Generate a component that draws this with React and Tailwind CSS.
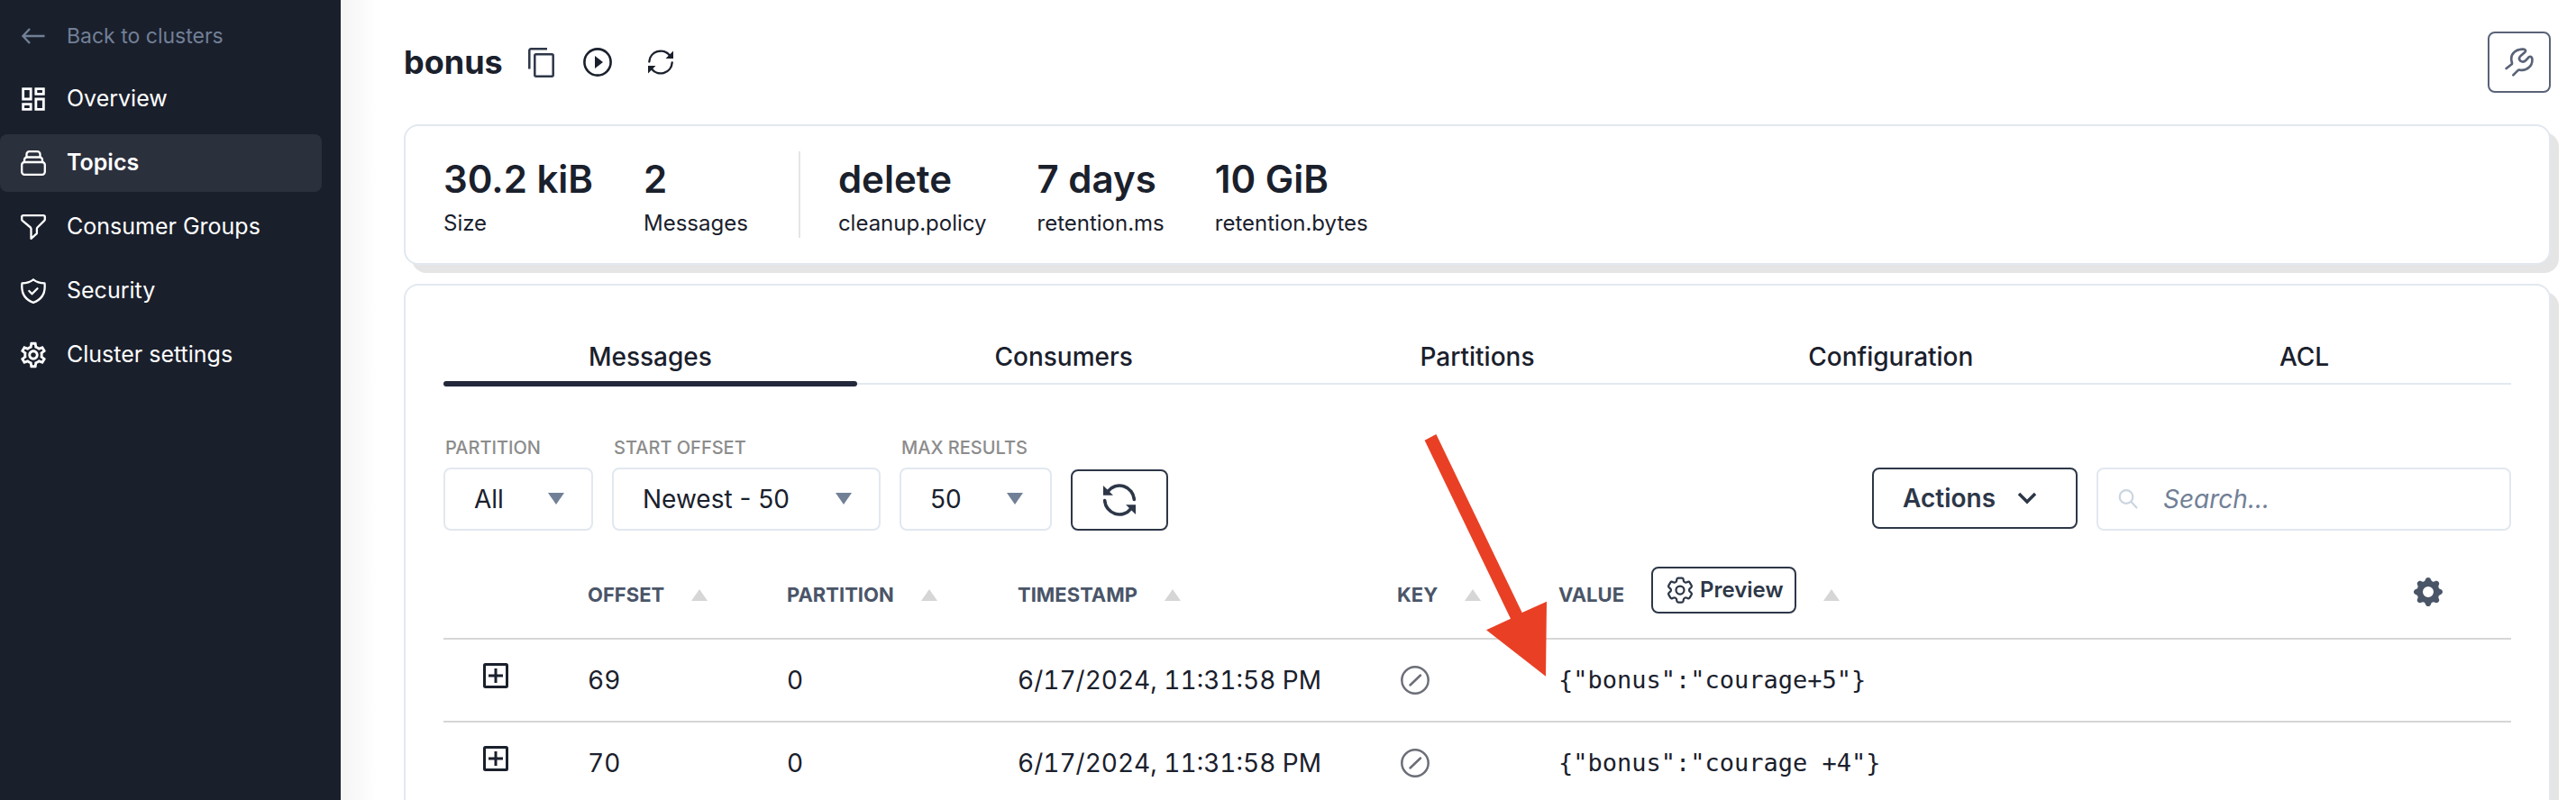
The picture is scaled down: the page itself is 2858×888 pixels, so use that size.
import { useState } from "react";
import { HiCog } from "react-icons/hi";
import { HiOutlineCog6Tooth } from "react-icons/hi2";
import { MdOutlineDashboard, MdOutlineSettings } from "react-icons/md";

function BackArrow() {
  return (
    <svg viewBox="0 0 28 28" className="size-7" fill="none" stroke="currentColor" strokeWidth="2.400">
      <path d="M26.500 14H2.500M10 6L2.500 14l7.500 8" />
    </svg>
  );
}

function TopicsIcon() {
  return (
    <svg viewBox="0 0 28 28" className="size-7" fill="none" stroke="currentColor" strokeWidth="2.300">
      <rect x="1.200" y="13" width="25.600" height="13.800" rx="3" />
      <path d="M4 13v-2.500a3 3 0 0 1 3-3h14a3 3 0 0 1 3 3V13" />
      <path d="M6.500 7.500V4.200a3 3 0 0 1 3-3h9a3 3 0 0 1 3 3v3.300" />
    </svg>
  );
}

function FunnelIcon() {
  return (
    <svg viewBox="0 0 28 28" className="size-7" fill="none" stroke="currentColor" strokeWidth="2.300" strokeLinejoin="round">
      <path d="M2.700 1.200h22.600a1.500 1.500 0 0 1 1.500 1.500v2.800a2 2 0 0 1-.6 1.400l-7.700 7.600a2 2 0 0 0-.6 1.400v5.200L11.500 26.800V15.900a2 2 0 0 0-.6-1.400L1.800 6.900a2 2 0 0 1-.6-1.400V2.700a1.500 1.500 0 0 1 1.500-1.500z" />
    </svg>
  );
}

function ShieldIcon() {
  return (
    <svg viewBox="0 0 28 28" className="size-7" fill="none" stroke="currentColor" strokeWidth="2.300" strokeLinecap="round" strokeLinejoin="round">
      <path d="M14 1.300c3.500 2.800 7.500 4 12.500 4 1.200 11-3 18.300-12.500 21.500C4.500 23.600.3 16.300 1.500 5.300c5 0 9-1.200 12.500-4z" />
      <path d="M9.300 14l3.200 3.300 6-6" />
    </svg>
  );
}

function SyncIcon({ className, stroke }) {
  return (
    <svg viewBox="0 0 28 28" className={className} fill="none" stroke="currentColor" strokeWidth={stroke} strokeLinecap="round">
      <path d="M1.300 13.500A12.700 12.700 0 0 1 24 6.500" />
      <path d="M26.700 14.500A12.700 12.700 0 0 1 4 21.500" />
      <path d="M28 1.500v8.500h-8.500z" fill="currentColor" stroke="none" />
      <path d="M0 26.500V18h8.500z" fill="currentColor" stroke="none" />
    </svg>
  );
}

function CopyIcon() {
  return (
    <svg viewBox="0 0 29 33" className="h-[33px] w-[29px]" fill="none" stroke="currentColor" strokeWidth="2.500">
      <path d="M1.300 23.500V3a1.700 1.700 0 0 1 1.700-1.700h18" />
      <rect x="7.300" y="7.300" width="20.400" height="24.400" rx="1.500" />
    </svg>
  );
}

function PlayIcon() {
  return (
    <svg viewBox="0 0 32 32" className="size-8" fill="none" stroke="currentColor" strokeWidth="2.600">
      <circle cx="16" cy="16" r="14.600" />
      <path d="M13 9l9 7-9 7z" fill="currentColor" stroke="none" />
    </svg>
  );
}

function WrenchIcon() {
  return (
    <svg viewBox="0 0 96 96" className="size-8" fill="none" stroke="currentColor" strokeWidth="8" strokeLinecap="round" strokeLinejoin="round">
      <path d="M5 69L24 54Q24 48 22 42C19 18 38 4 62 5Q74 7 66 16L52 28Q44 36 52 44Q62 50 70 42L80 31Q88 26 91 36C94 60 74 78 50 74Q46 73 43 76L28 91" />
    </svg>
  );
}

const nav = [
  { label: "Overview", icon: <MdOutlineDashboard className="size-[34px]" /> },
  { label: "Topics", icon: <TopicsIcon />, active: true },
  { label: "Consumer Groups", icon: <FunnelIcon /> },
  { label: "Security", icon: <ShieldIcon /> },
  { label: "Cluster settings", icon: <MdOutlineSettings className="size-[34px]" /> },
];

function Sidebar() {
  return (
    <nav className="w-[378px] shrink-0 bg-[#1a1f2c] pt-[9px] text-white" aria-label="Main">
      <a href="#clusters" className="flex h-[62px] items-center text-[23px] text-[#718096]">
        <span className="flex w-[74px] justify-center">
          <BackArrow />
        </span>
        Back to clusters
      </a>
      <ul className="mt-[7px] mr-[21px] flex flex-col gap-[7px]">
        {nav.map((n) => (
          <li key={n.label}>
            <a
              href={"#" + n.label}
              className={
                "flex h-16 items-center rounded-lg text-[25px] " +
                (n.active ? "bg-[#2b303d] font-semibold" : "")
              }
            >
              <span className="flex w-[74px] justify-center">{n.icon}</span>
              {n.label}
            </a>
          </li>
        ))}
      </ul>
    </nav>
  );
}

function Stat({ value, label }) {
  return (
    <div className="pt-1.5">
      <dd className="text-[42px] leading-[50px] font-semibold">{value}</dd>
      <dt className="mt-2 text-2xl leading-8">{label}</dt>
    </div>
  );
}

function Pick({ id, label, value, width }) {
  return (
    <div className={"flex flex-col gap-2 " + width}>
      <label htmlFor={id} className="pl-0.5 text-xl leading-7 font-medium text-[#8c8c8c]">
        {label}
      </label>
      <div className="relative">
        <select
          id={id}
          className="h-[70px] w-full appearance-none rounded-lg border-2 border-[#e2e8f0] bg-white pl-8 text-[28px]"
        >
          <option>{value}</option>
        </select>
        <svg viewBox="0 0 18 13" className="pointer-events-none absolute top-7 right-8 h-[13px] w-[18px] fill-[#718096]">
          <path d="M0 0h18l-9 13z" />
        </svg>
      </div>
    </div>
  );
}

function Head({ children }) {
  return (
    <th className="p-0 text-left">
      <span className="flex items-center gap-[30px]">
        {children}
        <svg viewBox="0 0 18 13" className="h-[13px] w-[18px] fill-[#d6d6d6]">
          <path d="M0 13h18L9 0z" />
        </svg>
      </span>
    </th>
  );
}

const rows = [
  { offset: 69, value: '{"bonus":"courage+5"}' },
  { offset: 70, value: '{"bonus":"courage +4"}' },
];

const tabs = ["Messages", "Consumers", "Partitions", "Configuration", "ACL"];

export default function App() {
  const [tab, setTab] = useState("Messages");
  return (
    <div className="flex h-screen overflow-hidden bg-white font-['Inter',sans-serif] text-[#1a202c]">
      <Sidebar />
      <main className="flex min-w-0 flex-1 flex-col bg-[linear-gradient(to_right,#f4f4f4,#ffffff_40px)] pr-7 pl-[70px]">
        <header className="flex h-[138px] shrink-0 items-center">
          <h1 className="text-4xl font-bold">bonus</h1>
          <button aria-label="Copy" className="ml-7 text-[#2d3748]">
            <CopyIcon />
          </button>
          <button aria-label="Play" className="ml-8">
            <PlayIcon />
          </button>
          <button aria-label="Refresh" className="ml-10">
            <SyncIcon className="size-7" stroke="2.400" />
          </button>
          <button
            aria-label="Tools"
            className="ml-auto flex h-[68px] w-[70px] items-center justify-center rounded-lg border-2 border-[#596377] text-[#596377]"
          >
            <WrenchIcon />
          </button>
        </header>

        <section className="h-[156px] shrink-0 rounded-2xl border-2 border-[#e2e8f0] bg-white px-[42px] pt-7 shadow-[9px_9px_0_#e5e5e5]">
          <dl className="flex">
            <div className="flex gap-14 border-r-2 border-[#e5e5e5] pr-14">
              <Stat value="30.2 kiB" label="Size" />
              <Stat value="2" label="Messages" />
            </div>
            <div className="flex gap-14 pl-[42px]">
              <Stat value="delete" label="cleanup.policy" />
              <Stat value="7 days" label="retention.ms" />
              <Stat value="10 GiB" label="retention.bytes" />
            </div>
          </dl>
        </section>

        <section className="relative mt-[21px] shrink-0 rounded-2xl border-2 border-[#e2e8f0] bg-white px-[42px] pt-12 pb-24 shadow-[9px_9px_0_#e5e5e5]">
          <div role="tablist" className="grid grid-cols-5">
            {tabs.map((t) => (
              <button
                key={t}
                role="tab"
                aria-selected={tab === t}
                onClick={() => setTab(t)}
                className="flex h-16 flex-col justify-end text-[28px] font-medium"
              >
                <span className="w-full pb-[9px] leading-9">{t}</span>
                <span className={"h-1.5 w-full " + (tab === t ? "rounded-full bg-[#23293b]" : "flex items-center")}>
                  {tab !== t && <span className="h-0.5 w-full bg-[#e2e8f0]" />}
                </span>
              </button>
            ))}
          </div>

          <div className="mt-[54px] flex items-end gap-[21px]">
            <Pick id="partition" label="PARTITION" value="All" width="w-[166px]" />
            <Pick id="start" label="START OFFSET" value="Newest - 50" width="w-[298px]" />
            <Pick id="max" label="MAX RESULTS" value="50" width="w-[169px]" />
            <button
              aria-label="Reload messages"
              className="flex h-[68px] w-[108px] items-center justify-center rounded-lg border-2 border-[#2d3748] text-[#2d3748]"
            >
              <SyncIcon className="size-9 -scale-x-100" stroke="2.800" />
            </button>
            <div className="ml-auto flex items-start gap-[21px]">
              <button className="flex h-[68px] w-[228px] items-center gap-6 rounded-lg border-2 border-[#2d3748] pl-8 text-[28px] font-semibold text-[#2d3748]">
                Actions
                <svg viewBox="0 0 22 14" className="h-3.5 w-[22px]" fill="none" stroke="currentColor" strokeWidth="3.500">
                  <path d="M2 2l9 9 9-9" />
                </svg>
              </button>
              <div className="relative w-[460px]">
                <svg viewBox="0 0 22 22" className="absolute top-6 left-6 size-[22px] text-[#cbd5e0]" fill="none" stroke="currentColor" strokeWidth="2.200" strokeLinecap="round">
                  <circle cx="9" cy="8.500" r="7.300" />
                  <path d="M14.500 14L20.500 20.500" />
                </svg>
                <input
                  type="search"
                  aria-label="Search"
                  placeholder="Search..."
                  className="h-[70px] w-full rounded-lg border-2 border-[#e2e8f0] pl-[72px] text-[28px] italic placeholder:text-[#718096]"
                />
              </div>
            </div>
          </div>

          <table className="mt-6 w-full table-fixed">
            <colgroup>
              <col className="w-[160px]" />
              <col className="w-[221px]" />
              <col className="w-[256px]" />
              <col className="w-[421px]" />
              <col className="w-[179px]" />
              <col />
              <col className="w-[184px]" />
            </colgroup>
            <thead>
              <tr className="h-24 border-b-2 border-[#d6d6d6] text-[22px] font-bold text-[#4a5568]">
                <th className="p-0" />
                <Head>OFFSET</Head>
                <Head>PARTITION</Head>
                <Head>TIMESTAMP</Head>
                <Head>KEY</Head>
                <Head>
                  VALUE
                  <button className="mb-3 flex h-[52px] items-center gap-1 rounded-lg border-2 border-[#2d3748] px-3 text-2xl font-semibold text-[#2d3748]">
                    <HiOutlineCog6Tooth className="size-9" />
                    Preview
                  </button>
                </Head>
                <th className="p-0">
                  <button aria-label="Columns" className="mb-2 block pl-[72px]">
                    <HiCog className="size-10" />
                  </button>
                </th>
              </tr>
            </thead>
            <tbody>
              {rows.map((r) => (
                <tr key={r.offset} className="h-[92px] border-b-2 border-[#d6d6d6] text-[28px] tabular-nums">
                  <td className="p-0 pb-2.5 pl-11">
                    <button aria-label="Expand row" className="block">
                      <svg viewBox="0 0 28 28" className="size-7" fill="none" stroke="currentColor" strokeWidth="3">
                        <rect x="1.500" y="1.500" width="25" height="25" rx="1" />
                        <path d="M14 6v16M6 14h16" />
                      </svg>
                    </button>
                  </td>
                  <td className="p-0">{r.offset}</td>
                  <td className="p-0">0</td>
                  <td className="p-0">6/17/2024, 11:31:58 PM</td>
                  <td className="p-0">
                    <svg viewBox="0 0 32 32" className="ml-1 size-8 text-[#6b6e77]" fill="none" stroke="currentColor" strokeWidth="2.500" strokeLinecap="round">
                      <circle cx="16" cy="16" r="14.700" />
                      <path d="M10.500 21.500L22 10.500" />
                    </svg>
                  </td>
                  <td className="p-0 font-['DejaVu_Sans_Mono',monospace] text-[27px]">{r.value}</td>
                  <td className="p-0" />
                </tr>
              ))}
            </tbody>
          </table>

          <svg viewBox="0 0 136 269" className="pointer-events-none absolute top-[165px] left-[1130px] h-[269px] w-[136px] fill-[#e94025]">
            <path d="M.6 6.700L13.400 0 108.700 198 136 185.700 135 268.700 69 217.300 96 204.700z" />
          </svg>
        </section>
      </main>
    </div>
  );
}
